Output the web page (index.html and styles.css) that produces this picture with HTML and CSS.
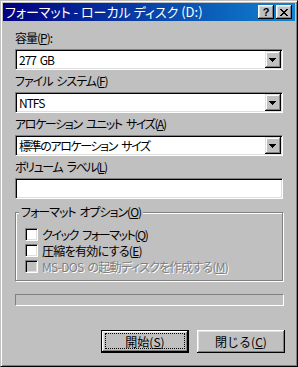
FILE: index.html
```html
<!DOCTYPE html>
<html lang="ja">
<head>
    <meta charset="UTF-8">
    <title>フォーマット - ローカル ディスク (D:)</title>
    <link rel="stylesheet" href="styles.css">
</head>
<body>
    <div class="window">
        <div class="titlebar">
            <span class="title">フォーマット - ローカル ディスク (D:)</span>
            <div class="title-buttons">
                <button class="tbtn help">?</button>
                <button class="tbtn">
                    <svg width="8" height="7" viewBox="0 0 8 7" shape-rendering="crispEdges">
                        <path d="M0 0h2v1h-2zM6 0h2v1h-2zM1 1h2v1h-2zM5 1h2v1h-2zM2 2h4v1h-4zM3 3h2v1h-2zM2 4h4v1h-4zM1 5h2v1h-2zM5 5h2v1h-2zM0 6h2v1h-2zM6 6h2v1h-2z" fill="#000"/>
                    </svg>
                </button>
            </div>
        </div>

        <div class="content">
            <div class="field">
                <label>容量(<u>P</u>):</label>
                <div class="combo">
                    <span class="value">277 GB</span>
                    <span class="drop"><svg width="7" height="4" viewBox="0 0 7 4" shape-rendering="crispEdges"><path d="M0 0h7v1h-1v1h-1v1h-1v1h-1v-1h-1v-1h-1v-1h-1z" fill="#000"/></svg></span>
                </div>
            </div>

            <div class="field">
                <label>ファイル システム(<u>F</u>)</label>
                <div class="combo">
                    <span class="value">NTFS</span>
                    <span class="drop"><svg width="7" height="4" viewBox="0 0 7 4" shape-rendering="crispEdges"><path d="M0 0h7v1h-1v1h-1v1h-1v1h-1v-1h-1v-1h-1v-1h-1z" fill="#000"/></svg></span>
                </div>
            </div>

            <div class="field">
                <label class="tight">アロケーション ユニット サイズ(<u>A</u>)</label>
                <div class="combo">
                    <span class="value tight">標準のアロケーション サイズ</span>
                    <span class="drop"><svg width="7" height="4" viewBox="0 0 7 4" shape-rendering="crispEdges"><path d="M0 0h7v1h-1v1h-1v1h-1v1h-1v-1h-1v-1h-1v-1h-1z" fill="#000"/></svg></span>
                </div>
            </div>

            <div class="field last">
                <label class="tight">ボリューム ラベル(<u>L</u>)</label>
                <div class="combo textbox"></div>
            </div>

            <fieldset class="group">
                <legend>フォーマット オプション(<u>O</u>)</legend>
                <div class="check"><span class="box"></span><span class="tight">クイック フォーマット(<u>Q</u>)</span></div>
                <div class="check"><span class="box"></span><span class="loose">圧縮を有効にする(<u>E</u>)</span></div>
                <div class="check disabled"><span class="box"></span><span class="loose">MS-DOS の起動ディスクを作成する(<u>M</u>)</span></div>
            </fieldset>

            <div class="progress"></div>

            <div class="buttons">
                <button class="btn default"><span class="focus"><span>開始(<u>S</u>)</span></span></button>
                <button class="btn"><span class="plain"><span>閉じる(<u>C</u>)</span></span></button>
            </div>
        </div>
    </div>
</body>
</html>
```

FILE: styles.css
```css
body {
    margin: 0;
    background: #c0c0c0;
    font-family: "Noto Sans CJK JP", sans-serif;
    font-size: 12px;
    font-feature-settings: "palt";
    letter-spacing: -1px;
    word-spacing: 2px;
    overflow: hidden;
}

.tight {
    letter-spacing: -1.4px;
    word-spacing: 3px;
}

.loose {
    letter-spacing: -0.7px;
}

.window {
    width: 298px;
    height: 367px;
    box-sizing: border-box;
    border: 1px solid;
    border-color: #c0c0c0 #000 #000 #c0c0c0;
    box-shadow: inset 1px 1px #fff, inset -1px -1px #808080;
    padding: 2px;
    background: #c0c0c0;
}

.titlebar {
    height: 18px;
    display: flex;
    align-items: center;
    justify-content: space-between;
    background: linear-gradient(to right, #000080, #1084d0);
    color: #fff;
    padding: 0 3px 0 2px;
}

.title {
    font-size: 13px;
    line-height: 18px;
    letter-spacing: 0;
    word-spacing: 0;
    white-space: nowrap;
}

.title-buttons {
    display: flex;
    gap: 2px;
}

.tbtn {
    width: 16px;
    height: 14px;
    padding: 0;
    border: none;
    background: #c0c0c0;
    box-shadow: inset -1px -1px #000, inset 1px 1px #fff, inset -2px -2px #808080, inset 2px 2px #dfdfdf;
    display: flex;
    align-items: center;
    justify-content: center;
}

.tbtn.help {
    font-family: "Liberation Sans", sans-serif;
    font-weight: bold;
    font-size: 11px;
    line-height: 12px;
    letter-spacing: 0;
    color: #000;
}

.content {
    padding: 10px 12px 0 12px;
}

.field {
    margin-bottom: 4px;
}

.field.last {
    margin-bottom: 0;
}

.field label {
    display: block;
    height: 14px;
    line-height: 14px;
    margin-bottom: 4px;
    white-space: nowrap;
}

.combo {
    height: 21px;
    box-sizing: border-box;
    border: 1px solid;
    border-color: #808080 #fff #fff #808080;
    box-shadow: inset 1px 1px #000, inset -1px -1px #dfdfdf;
    background: #fff;
    padding: 1px;
    display: flex;
    align-items: center;
}

.combo .value {
    flex: 1;
    padding-left: 2px;
    line-height: 17px;
    white-space: nowrap;
    overflow: hidden;
}

.combo .drop {
    width: 16px;
    height: 17px;
    background: #c0c0c0;
    box-shadow: inset -1px -1px #000, inset 1px 1px #dfdfdf, inset -2px -2px #808080, inset 2px 2px #fff;
    display: flex;
    align-items: center;
    justify-content: center;
}

.combo .drop svg {
    margin-left: -1px;
}

.group {
    margin: 6px 0 0 0;
    padding: 7px 0 6px 9px;
    border: 1px solid #808080;
    box-shadow: inset 1px 1px #fff, 1px 1px #fff;
}

.group legend {
    margin-left: -6px;
    padding: 0 2px;
    height: 14px;
    line-height: 14px;
    background: #c0c0c0;
    white-space: nowrap;
}

.check {
    height: 16px;
    display: flex;
    align-items: center;
    gap: 4px;
    white-space: nowrap;
}

.check .box {
    width: 13px;
    height: 13px;
    box-sizing: border-box;
    border: 1px solid;
    border-color: #808080 #fff #fff #808080;
    box-shadow: inset 1px 1px #000, inset -1px -1px #dfdfdf;
    background: #fff;
}

.check.disabled {
    color: #808080;
    text-shadow: 1px 1px #fff;
}

.check.disabled .box {
    background: #c0c0c0;
}

.progress {
    margin: 13px -1px 0 0;
    height: 12px;
    box-sizing: border-box;
    border: 1px solid;
    border-color: #808080 #fff #fff #808080;
}

.buttons {
    margin: 24px -2px 0 0;
    display: flex;
    justify-content: flex-end;
    gap: 8px;
}

.btn {
    width: 88px;
    height: 23px;
    box-sizing: border-box;
    padding: 3px;
    border: none;
    background: #c0c0c0;
    box-shadow: inset -1px -1px #000, inset 1px 1px #fff, inset -2px -2px #808080, inset 2px 2px #dfdfdf;
    font-family: inherit;
    font-size: 12px;
    letter-spacing: 0;
    color: #000;
    display: flex;
}

.btn.default {
    border: 1px solid #000;
    padding: 2px 3px 3px 3px;
}

.btn .focus,
.btn .plain {
    flex: 1;
    display: flex;
    align-items: center;
    justify-content: center;
    border: 1px dotted transparent;
    white-space: nowrap;
}

.btn .focus {
    border-color: #000;
}
```
